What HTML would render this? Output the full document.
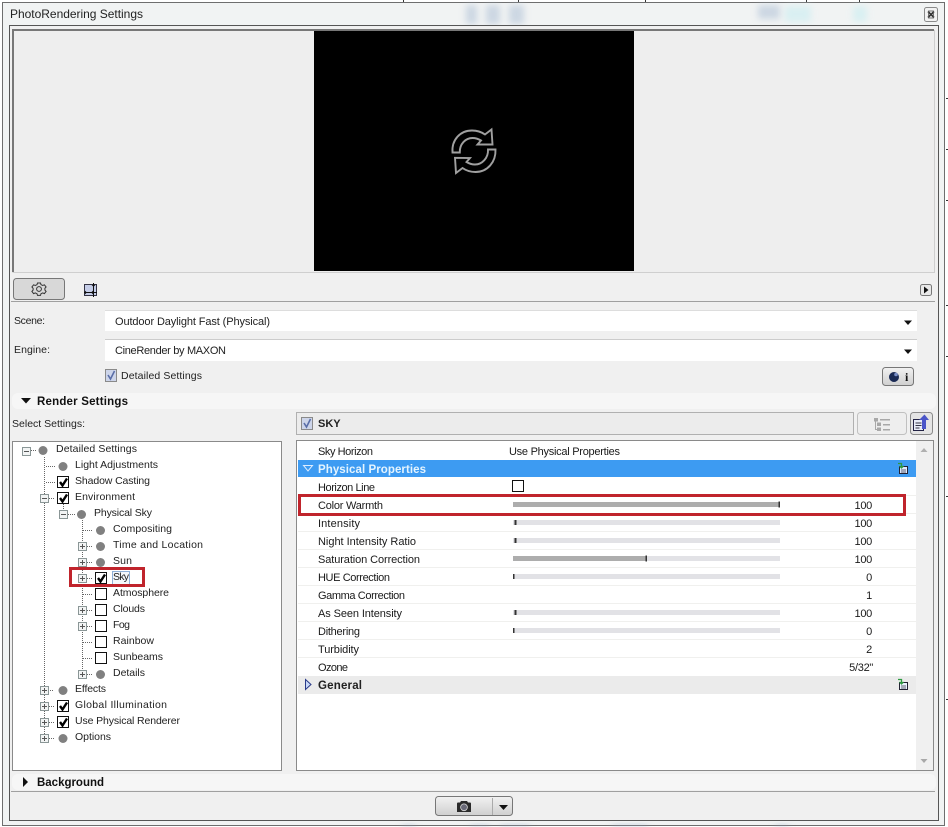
<!DOCTYPE html>
<html><head><meta charset="utf-8"><title>PhotoRendering Settings</title>
<style>
html,body{margin:0;padding:0;background:#fff;width:948px;height:827px;overflow:hidden}
svg{display:block}
text{font-family:"Liberation Sans",sans-serif;fill:#1c1c1c}
.t{font-size:10.5px;fill:#222}
.r{font-size:11px;fill:#1a1a1a}
.v{font-size:11px;letter-spacing:-.3px;fill:#1a1a1a;text-anchor:end}
.b{font-size:11.5px;font-weight:bold;fill:#111}
.ex{fill:#f2f4f4;stroke:#8a9696;stroke-width:1}
.cr{stroke:#555;stroke-width:1;fill:none}
.dot{stroke:#666;stroke-width:1;stroke-dasharray:1 1;fill:none}
.bul{fill:#808080}
.cb{fill:#fff;stroke:#111;stroke-width:1}
.ck{fill:none;stroke:#000;stroke-width:2.4}
.tr{fill:#e2e2e6}
.fl{fill:#adadad}
.mk{fill:#333}
.ln{stroke:#f0f0ee;stroke-width:1}
</style></head>
<body>
<svg width="948" height="827" viewBox="0 0 948 827" xmlns="http://www.w3.org/2000/svg">
<defs>
<filter id="bl" x="-30%" y="-80%" width="160%" height="260%"><feGaussianBlur stdDeviation="3.500"/></filter>
<linearGradient id="btn" x1="0" y1="0" x2="0" y2="1"><stop offset="0" stop-color="#f2f2f2"/><stop offset="1" stop-color="#cfcfcf"/></linearGradient>
</defs>
<rect width="948" height="827" fill="#fff"/>
<g stroke="#333" stroke-width="1">
<path d="M946 98.500h2M946 149.500h2M946 200.500h2M946 305.500h2M946 356.500h2M946 496.500h2M946 699.500h2"/>
<path d="M403.500 0v2M518.500 0v2M645.500 0v2M806.500 0v2M859.500 0v2"/>
</g>
<!-- window -->
<rect x="2.500" y="2.500" width="942" height="823" fill="#f1f3f3" stroke="#6e6e6e"/>
<g filter="url(#bl)" fill="#b4c4d8" opacity=".6">
<rect x="466" y="5" width="11" height="19"/>
<rect x="486" y="5" width="14" height="19"/>
<rect x="509" y="5" width="15" height="19"/>
<rect x="758" y="5" width="22" height="14"/>
</g>
<g filter="url(#bl)" fill="#cfeef2" opacity=".7">
<rect x="785" y="6" width="26" height="16"/>
<rect x="853" y="6" width="14" height="16"/>
</g>
<rect x="3" y="3" width="6" height="822" fill="#f1f3f3"/>
<rect x="940" y="3" width="4" height="822" fill="#f1f3f3"/>
<rect x="3" y="821" width="941" height="4" fill="#f1f3f3"/>
<g filter="url(#bl)" fill="#9fb0c8" opacity=".6">
<rect x="402" y="825" width="14" height="3"/>
<rect x="470" y="825" width="20" height="3"/>
<rect x="500" y="825" width="30" height="3"/>
<rect x="612" y="825" width="36" height="3"/>
<rect x="775" y="825" width="14" height="3"/>
</g>
<text x="10" y="18" textLength="133" style="font-size:12px;fill:#222">PhotoRendering Settings</text>
<rect x="924.500" y="7.500" width="13" height="14" rx="2" fill="#f2f2f2" stroke="#8a8a8a"/>
<path d="M928 11.500l6 6M934 11.500l-6 6" stroke="#333" stroke-width="1.600"/>
<rect x="928.500" y="11" width="5" height="7" fill="none" stroke="#555" stroke-width=".8"/>
<!-- dialog body -->
<rect x="9.500" y="25.500" width="929" height="795" fill="#f0f0f0" stroke="#555"/>
<!-- preview -->
<rect x="13" y="30" width="921" height="242" fill="#eeeeee"/>
<path d="M13 272V30H934" fill="none" stroke="#777" stroke-width="2"/>
<path d="M12.500 272.500H934.500V30" fill="none" stroke="#cfcfcf"/>
<rect x="314" y="31" width="320" height="240" fill="#000"/>
<g fill="none" stroke="#a0a0a0" stroke-width="1.900" stroke-linejoin="miter">
<path d="M452.500 152.500C451.500 140 460 130.500 472 130.500C477 130.500 481.500 132 485 134.500L491.500 129.500L492.500 144.500L477.500 144.500L481 140.500C478.500 139 475.500 138 472.500 138C465.500 138 459.500 144 459.800 152.500Z"/>
<path d="M495.500 149.500C496 162 487.500 172 475.500 172C470.500 172 466 170.500 462.500 168L456 173L455 157.800L470 158L466.500 162C469 163.500 472 164.500 475 164.500C482 164.500 488.500 158 488 149.500Z"/>
</g>
<!-- toolbar -->
<rect x="13.500" y="278.500" width="51" height="21" rx="3" fill="#d8d8d8" stroke="#777"/>
<g fill="none" stroke="#333">
<circle cx="39" cy="289" r="2.400"/>
<path d="M37.500 283h3l.5 1.700 1.700.8 1.700-.7 1.700 2.200-1.200 1.300v1.800l1.200 1.300-1.700 2.200-1.700-.7-1.700.8-.5 1.700h-3l-.5-1.700-1.700-.8-1.700.7-1.700-2.200 1.200-1.300v-1.800l-1.200-1.300 1.700-2.200 1.700.7 1.700-.8z"/>
</g>
<rect x="84.500" y="284.500" width="12" height="11" fill="#c5cde8" stroke="#334"/>
<path d="M84 292.500h13M93.500 283v14" stroke="#111"/>
<path d="M86 291l-1.500 1.500 1.500 1.500M92 291l1.500 1.500-1.500 1.500M92 286l1.500-1.500 1.500 1.500" fill="none" stroke="#111" stroke-width=".8"/>
<rect x="920.500" y="284.500" width="11" height="11" rx="2" fill="#e8e8e8" stroke="#777"/>
<path d="M924 286.500l4.500 3.500-4.500 3.500z" fill="#111"/>
<line x1="11" x2="935" y1="301.500" y2="301.500" stroke="#a0a0a0"/>
<!-- scene / engine -->
<text x="14" y="324" textLength="31" class="t">Scene:</text>
<text x="14" y="353" textLength="36" class="t">Engine:</text>
<rect x="105" y="310" width="812" height="21" fill="#fff"/>
<path d="M105 310.500H917" stroke="#ddd"/>
<rect x="105" y="340" width="812" height="21" fill="#fff"/>
<path d="M105 339.500H917" stroke="#ccc"/>
<text x="115" y="325" textLength="155" style="font-size:11px;fill:#222">Outdoor Daylight Fast (Physical)</text>
<text x="115" y="354" textLength="111" style="font-size:11px;fill:#222">CineRender by MAXON</text>
<path d="M904 320.500h8l-4 4.500z" fill="#111"/>
<path d="M904 349.500h8l-4 4.500z" fill="#111"/>
<rect x="105.500" y="369.500" width="11" height="12" fill="#cdd5ea" stroke="#8a8a8a"/>
<path d="M108 375l2.500 4 4-8" fill="none" stroke="#5a6ea8" stroke-width="1.600"/>
<text x="121" y="379" textLength="81" class="t">Detailed Settings</text>
<rect x="882.500" y="367.500" width="31" height="18" rx="3" fill="url(#btn)" stroke="#777"/>
<circle cx="894" cy="377" r="5" fill="#1a2a55"/>
<circle cx="896" cy="374.500" r="1.800" fill="#7a8fc8"/>
<text x="905" y="381" style="font-size:12px;font-weight:bold;font-family:'Liberation Serif',serif;fill:#111">i</text>
<!-- render settings -->
<rect x="12" y="393" width="924" height="16" rx="6" fill="#f6f6f6"/>
<path d="M21 398h10l-5 5.500z" fill="#111"/>
<text x="37" y="405" textLength="91" class="b">Render Settings</text>
<text x="12" y="427" textLength="73" class="t">Select Settings:</text>
<!-- sky head -->
<rect x="296.500" y="412.500" width="557" height="22" fill="#ececec" stroke="#b0b0b0"/>
<rect x="301.500" y="417.500" width="11" height="12" fill="#cdd5ea" stroke="#8a8a8a"/>
<path d="M304 423l2.500 4 4-8" fill="none" stroke="#5a6ea8" stroke-width="1.600"/>
<text x="318" y="427" style="font-size:11px;font-weight:bold;fill:#222">SKY</text>
<rect x="857.500" y="412.500" width="49" height="22" rx="3" fill="#eeeeee" stroke="#c0c0c0"/>
<g fill="#a8a8a8">
<rect x="874" y="418" width="4" height="3.500"/><rect x="880" y="419" width="10" height="1.500"/>
<rect x="877" y="422.500" width="4" height="3.500"/><rect x="883" y="424" width="7" height="1.500"/>
<rect x="877" y="427.500" width="4" height="3.500"/><rect x="883" y="429" width="7" height="1.500"/>
</g>
<path d="M875.500 421.500v8h1.500" stroke="#a8a8a8" fill="none"/>
<rect x="910.500" y="412.500" width="22" height="22" rx="3" fill="#e4e4e4" stroke="#8a8a8a"/>
<rect x="913.500" y="419.500" width="10" height="11" fill="#e8ecf8" stroke="#222244"/>
<path d="M915.500 423h6M915.500 425.500h6M915.500 428h4" stroke="#334"/>
<path d="M922 429v-9h-3l5.500-5.500 4.500 5.500h-3v9z" fill="#4a55c8"/>
<!-- tree -->
<rect x="12.500" y="441.500" width="269" height="329" fill="#fff" stroke="#8a8a8a"/>
<path class="dot" d="M44.500 457v282M63.500 504v10M82.500 520v154"/>
<path class="dot" d="M31 450.500h6M46 466.500h9M46 482.500h9M49 498.500h6M68 514.500h7M46 690.500h8M49 706.500h6M49 722.500h6M49 738.500h6M83 530.500h10M87 546.500h6M87 562.500h6M87 578.500h6M83 594.500h10M87 610.500h6M87 626.500h6M83 642.500h10M83 658.500h10M87 674.500h6"/>
<!-- expanders -->
<g>
<rect class="ex" x="22.500" y="447.500" width="8" height="8"/><path class="cr" d="M24 451.500h5"/>
<rect class="ex" x="40.500" y="494.500" width="8" height="8"/><path class="cr" d="M42 498.500h5"/>
<rect class="ex" x="59.500" y="510.500" width="8" height="8"/><path class="cr" d="M61 514.500h5"/>
<rect class="ex" x="78.500" y="542.500" width="8" height="8"/><path class="cr" d="M80 546.500h5M82.500 544v5"/>
<rect class="ex" x="78.500" y="558.500" width="8" height="8"/><path class="cr" d="M80 562.500h5M82.500 560v5"/>
<rect class="ex" x="78.500" y="574.500" width="8" height="8"/><path class="cr" d="M80 578.500h5M82.500 576v5"/>
<rect class="ex" x="78.500" y="606.500" width="8" height="8"/><path class="cr" d="M80 610.500h5M82.500 608v5"/>
<rect class="ex" x="78.500" y="622.500" width="8" height="8"/><path class="cr" d="M80 626.500h5M82.500 624v5"/>
<rect class="ex" x="78.500" y="670.500" width="8" height="8"/><path class="cr" d="M80 674.500h5M82.500 672v5"/>
<rect class="ex" x="40.500" y="686.500" width="8" height="8"/><path class="cr" d="M42 690.500h5M44.500 688v5"/>
<rect class="ex" x="40.500" y="702.500" width="8" height="8"/><path class="cr" d="M42 706.500h5M44.500 704v5"/>
<rect class="ex" x="40.500" y="718.500" width="8" height="8"/><path class="cr" d="M42 722.500h5M44.500 720v5"/>
<rect class="ex" x="40.500" y="734.500" width="8" height="8"/><path class="cr" d="M42 738.500h5M44.500 736v5"/>
</g>
<!-- bullets -->
<circle class="bul" cx="43" cy="450.500" r="4.500"/>
<circle class="bul" cx="63" cy="466.500" r="4.500"/>
<circle class="bul" cx="81.500" cy="514.500" r="4.500"/>
<circle class="bul" cx="100.500" cy="530.500" r="4.500"/>
<circle class="bul" cx="100.500" cy="546.500" r="4.500"/>
<circle class="bul" cx="100.500" cy="562.500" r="4.500"/>
<circle class="bul" cx="100.500" cy="674.500" r="4.500"/>
<circle class="bul" cx="63" cy="690.500" r="4.500"/>
<circle class="bul" cx="63" cy="738.500" r="4.500"/>
<!-- checkboxes -->
<rect class="cb" x="57.500" y="476.500" width="11" height="11"/><path class="ck" d="M60 482l2.500 3.500 4.500-7"/>
<rect class="cb" x="57.500" y="492.500" width="11" height="11"/><path class="ck" d="M60 498l2.500 3.500 4.500-7"/>
<rect class="cb" x="95.500" y="572.500" width="11" height="11"/><path class="ck" d="M98 578l2.500 3.500 4.500-7"/>
<rect class="cb" x="95.500" y="588.500" width="11" height="11"/>
<rect class="cb" x="95.500" y="604.500" width="11" height="11"/>
<rect class="cb" x="95.500" y="620.500" width="11" height="11"/>
<rect class="cb" x="95.500" y="636.500" width="11" height="11"/>
<rect class="cb" x="95.500" y="652.500" width="11" height="11"/>
<rect class="cb" x="57.500" y="700.500" width="11" height="11"/><path class="ck" d="M60 706l2.500 3.500 4.500-7"/>
<rect class="cb" x="57.500" y="716.500" width="11" height="11"/><path class="ck" d="M60 722l2.500 3.500 4.500-7"/>
<!-- tree labels -->
<text class="t" x="56" y="452" textLength="81">Detailed Settings</text>
<text class="t" x="75" y="468" textLength="83">Light Adjustments</text>
<text class="t" x="75" y="484" textLength="75">Shadow Casting</text>
<text class="t" x="75" y="500" textLength="60">Environment</text>
<text class="t" x="94" y="516" textLength="58">Physical Sky</text>
<text class="t" x="113" y="532" textLength="59">Compositing</text>
<text class="t" x="113" y="548" textLength="90">Time and Location</text>
<text class="t" x="113" y="564" textLength="19">Sun</text>
<rect x="112.500" y="571.500" width="17" height="13" fill="#f4f8fc" stroke="#8fb0d8"/>
<text class="t" x="113" y="580" textLength="16">Sky</text>
<text class="t" x="113" y="596" textLength="56">Atmosphere</text>
<text class="t" x="113" y="612" textLength="32">Clouds</text>
<text class="t" x="113" y="628" textLength="17">Fog</text>
<text class="t" x="113" y="644" textLength="41">Rainbow</text>
<text class="t" x="113" y="660" textLength="50">Sunbeams</text>
<text class="t" x="113" y="676" textLength="32">Details</text>
<text class="t" x="75" y="692" textLength="31">Effects</text>
<text class="t" x="75" y="708" textLength="92">Global Illumination</text>
<text class="t" x="75" y="724" textLength="105">Use Physical Renderer</text>
<text class="t" x="75" y="740" textLength="36">Options</text>
<rect x="70.500" y="568.500" width="73" height="17" fill="none" stroke="#c0242c" stroke-width="3"/>
<!-- property panel -->
<rect x="296.500" y="440.500" width="637" height="330" fill="#fff" stroke="#8a8a8a"/>
<rect x="916" y="441" width="17" height="329" fill="#f0f0f0"/>
<path d="M920.500 452l3.500-4 3.500 4z" fill="#b0b0b0"/>
<path d="M920.500 759l3.500 4 3.500-4z" fill="#a8a8a8"/>
<g class="ln">
<line x1="298" x2="916" y1="495.500" y2="495.500"/><line x1="298" x2="916" y1="513.500" y2="513.500"/>
<line x1="298" x2="916" y1="531.500" y2="531.500"/><line x1="298" x2="916" y1="549.500" y2="549.500"/>
<line x1="298" x2="916" y1="567.500" y2="567.500"/><line x1="298" x2="916" y1="585.500" y2="585.500"/>
<line x1="298" x2="916" y1="603.500" y2="603.500"/><line x1="298" x2="916" y1="621.500" y2="621.500"/>
<line x1="298" x2="916" y1="639.500" y2="639.500"/><line x1="298" x2="916" y1="657.500" y2="657.500"/>
</g>
<rect x="298" y="460" width="618" height="17" fill="#3d9bf2"/>
<path d="M303.500 465.500h9l-4.500 5.500z" fill="#3d9bf2" stroke="#dcecff"/>
<text x="318" y="473" textLength="108" style="font-size:11.500px;font-weight:bold;fill:#e4f4ff">Physical Properties</text>
<rect x="899.500" y="466.500" width="8" height="7" fill="#dfeaff" stroke="#223"/>
<path d="M901 470h5M901 472h5" stroke="#334" stroke-width=".8"/>
<path d="M898 463.500h3.500v4M899.500 466l2 2 2-2" fill="none" stroke="#2e9a40" stroke-width="1.300"/>
<rect x="298" y="676" width="618" height="18" fill="#ebebeb"/>
<path d="M305.500 679.500v10l5.500-5z" fill="#c8d8f8" stroke="#2a3a88"/>
<text x="318" y="689" textLength="44" style="font-size:11.500px;font-weight:bold;fill:#222">General</text>
<rect x="899.500" y="682.500" width="8" height="7" fill="#eaf2ff" stroke="#223"/>
<path d="M901 686h5M901 688h5" stroke="#334" stroke-width=".8"/>
<path d="M898 679.500h3.500v4M899.500 682l2 2 2-2" fill="none" stroke="#2e9a40" stroke-width="1.300"/>
<!-- property labels -->
<text class="r" x="318" y="455" textLength="55">Sky Horizon</text>
<text class="r" x="509" y="455" textLength="111">Use Physical Properties</text>
<text class="r" x="318" y="491" textLength="57">Horizon Line</text>
<rect class="cb" x="512.500" y="480.500" width="11" height="11"/>
<text class="r" x="318" y="509" textLength="65">Color Warmth</text>
<text class="r" x="318" y="527" textLength="42">Intensity</text>
<text class="r" x="318" y="545" textLength="98">Night Intensity Ratio</text>
<text class="r" x="318" y="563" textLength="102">Saturation Correction</text>
<text class="r" x="318" y="581" textLength="72">HUE Correction</text>
<text class="r" x="318" y="599" textLength="87">Gamma Correction</text>
<text class="r" x="318" y="617" textLength="84">As Seen Intensity</text>
<text class="r" x="318" y="635" textLength="42">Dithering</text>
<text class="r" x="318" y="653" textLength="41">Turbidity</text>
<text class="r" x="318" y="671" textLength="30">Ozone</text>
<!-- values -->
<text class="v" x="872" y="509">100</text>
<text class="v" x="872" y="527">100</text>
<text class="v" x="872" y="545">100</text>
<text class="v" x="872" y="563">100</text>
<text class="v" x="872" y="581">0</text>
<text class="v" x="872" y="599">1</text>
<text class="v" x="872" y="617">100</text>
<text class="v" x="872" y="635">0</text>
<text class="v" x="872" y="653">2</text>
<text class="v" x="873" y="671">5/32"</text>
<!-- sliders -->
<rect class="tr" x="513" y="502" width="267" height="5"/><rect class="fl" x="513" y="502" width="266" height="5"/><rect class="mk" x="778.500" y="501.500" width="1.500" height="6"/>
<rect class="tr" x="513" y="520" width="267" height="5"/><rect class="mk" x="514.500" y="520" width="2" height="5"/>
<rect class="tr" x="513" y="538" width="267" height="5"/><rect class="mk" x="514.500" y="538" width="2" height="5"/>
<rect class="tr" x="513" y="556" width="267" height="5"/><rect class="fl" x="513" y="556" width="133" height="5"/><rect class="mk" x="645.500" y="555.500" width="1.500" height="6"/>
<rect class="tr" x="513" y="574" width="267" height="5"/><rect class="mk" x="513" y="574" width="1.500" height="5"/>
<rect class="tr" x="513" y="610" width="267" height="5"/><rect class="mk" x="514.500" y="610" width="2" height="5"/>
<rect class="tr" x="513" y="628" width="267" height="5"/><rect class="mk" x="513" y="628" width="1.500" height="5"/>
<rect x="299.500" y="495.500" width="605" height="19" fill="none" stroke="#c0242c" stroke-width="3"/>
<!-- background row -->
<rect x="12" y="774" width="924" height="16" rx="6" fill="#f6f6f6"/>
<path d="M23 777v10l5-5z" fill="#111"/>
<text x="37" y="786" textLength="67" class="b">Background</text>
<line x1="11" x2="935" y1="791.500" y2="791.500" stroke="#a0a0a0"/>
<!-- camera button -->
<rect x="435.500" y="796.500" width="77" height="19" rx="3" fill="url(#btn)" stroke="#777"/>
<line x1="492.500" x2="492.500" y1="798" y2="815" stroke="#aaa"/>
<path d="M457 803.500q0-1 1-1h2l1-1.500h6l1 1.500h2q1 0 1 1v8.500h-14z" fill="#2a2a2a"/>
<circle cx="464" cy="807.300" r="3.400" fill="#6a6a78" stroke="#d8d8d8" stroke-width=".8"/>
<path d="M499 805h9l-4.500 5z" fill="#111"/>
</svg>
</body></html>
